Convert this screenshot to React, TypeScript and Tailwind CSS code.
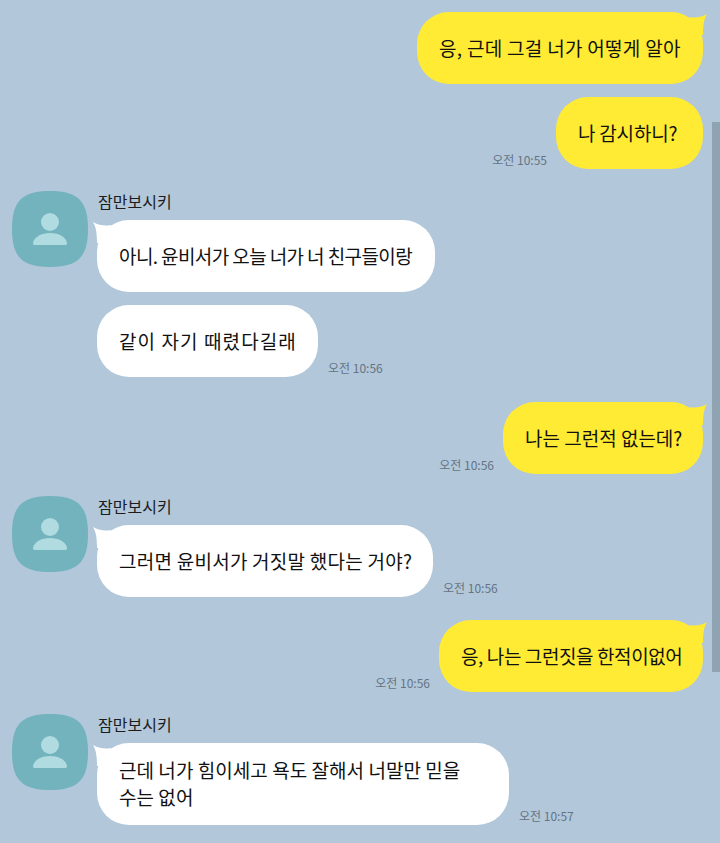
// App.tsx
const FONT = "font-['Noto_Sans_CJK_KR','Noto_Sans',sans-serif]";

function Avatar() {
  return (
    <svg width="76" height="76" viewBox="0 0 76 76" className="shrink-0">
      <path d="M38 0C66 0 76 10 76 38C76 66 66 76 38 76C10 76 0 66 0 38C0 10 10 0 38 0Z" fill="#72b3bd" />
      <circle cx="38" cy="31" r="9" fill="#b0dbe0" />
      <path d="M21 52C22 46 29 42 38 42C47 42 54 46 55 52C55 54 54 54 52 54H24C22 54 21 54 21 52Z" fill="#b0dbe0" />
    </svg>
  );
}

function Time({ text }: { text: string }) {
  return <span className="mb-[1px] text-[12px] leading-[16px] text-[#647484] whitespace-nowrap">{text}</span>;
}

function Bubble({
  text,
  mine,
  tail,
  width,
  tracking,
}: {
  text: React.ReactNode;
  mine?: boolean;
  tail?: boolean;
  width?: string;
  tracking?: string;
}) {
  return (
    <div
      className={`relative flex min-h-[72px] items-center rounded-[32px] px-[22px] py-[14px] text-[19px] leading-[27px] whitespace-nowrap text-[#111111] ${
        mine ? "bg-[#ffeb33]" : "bg-white"
      } ${width ?? ""}`}
    >
      {tail && mine && (
        <svg width="18" height="22" viewBox="0 0 18 22" className="absolute right-[-4px] top-[1px]">
          <path d="M0 4C5 5 11 5 18 1C15 6 14 12 14 22L0 22Z" fill="#ffeb33" />
        </svg>
      )}
      {tail && !mine && (
        <svg width="18" height="22" viewBox="0 0 18 22" className="absolute left-[-4px] top-[1px]">
          <path d="M18 4C13 5 7 5 0 1C3 6 4 12 4 22L18 22Z" fill="#ffffff" />
        </svg>
      )}
      <span className={`relative -translate-y-px ${tracking ?? ""}`}>{text}</span>
    </div>
  );
}

type RowProps = { text: React.ReactNode; time?: string; tail?: boolean; width: string; tracking: string };

function Mine({ text, time, tail, width, tracking }: RowProps) {
  return (
    <div className="flex items-end justify-end gap-[9px] pr-[17px]">
      {time && <Time text={time} />}
      <Bubble text={text} mine tail={tail} width={width} tracking={tracking} />
    </div>
  );
}

function Theirs({ text, time, tail, width, tracking }: RowProps) {
  return (
    <div className="flex items-end gap-[10px]">
      <Bubble text={text} tail={tail} width={width} tracking={tracking} />
      {time && <Time text={time} />}
    </div>
  );
}

function Group({ children }: { children: React.ReactNode }) {
  return (
    <div className="flex items-start gap-[9px] pl-[12px]">
      <Avatar />
      <div className="flex flex-col">
        <div className="h-[29px] pl-[1px] text-[16px] leading-[20px] text-[#1c1c1c]">잠만보시키</div>
        <div className="flex flex-col gap-[13px]">{children}</div>
      </div>
    </div>
  );
}

export default function App() {
  return (
    <div className={`relative h-[843px] w-[720px] overflow-hidden bg-[#b2c7da] pt-[12px] ${FONT}`}>
      <div className="absolute right-0 top-[122px] h-[550px] w-[8px] bg-[#8fa3b3]" />
      <div className="flex flex-col">
        <div className="flex flex-col gap-[13px]">
          <Mine text="응, 근데 그걸 너가 어떻게 알아" tail width="w-[286px]" tracking="tracking-[0.3px]" />
          <Mine text="나 감시하니?" time="오전 10:55" width="w-[147px]" tracking="tracking-[-0.2px]" />
        </div>
        <div className="mt-[22px]">
          <Group>
            <Theirs text="아니. 윤비서가 오늘 너가 너 친구들이랑" tail width="w-[338px]" tracking="tracking-[-0.6px]" />
            <Theirs text="같이 자기 때렸다길래" time="오전 10:56" width="w-[221px]" tracking="tracking-[1.1px]" />
          </Group>
        </div>
        <div className="mt-[25px]">
          <Mine text="나는 그런적 없는데?" tail time="오전 10:56" width="w-[200px]" tracking="tracking-[0px]" />
        </div>
        <div className="mt-[22px]">
          <Group>
            <Theirs
              text="그러면 윤비서가 거짓말 했다는 거야?"
              tail
              time="오전 10:56"
              width="w-[336px]"
              tracking="tracking-[0.25px]"
            />
          </Group>
        </div>
        <div className="mt-[23px]">
          <Mine
            text="응, 나는 그런짓을 한적이없어"
            tail
            time="오전 10:56"
            width="w-[264px]"
            tracking="tracking-[-0.4px]"
          />
        </div>
        <div className="mt-[22px]">
          <Group>
            <Theirs
              text={
                <>
                  근데 너가 힘이세고 욕도 잘해서 너말만 믿을
                  <br />
                  수는 없어
                </>
              }
              tail
              time="오전 10:57"
              width="w-[412px]"
              tracking="tracking-[0.05px]"
            />
          </Group>
        </div>
      </div>
    </div>
  );
}
